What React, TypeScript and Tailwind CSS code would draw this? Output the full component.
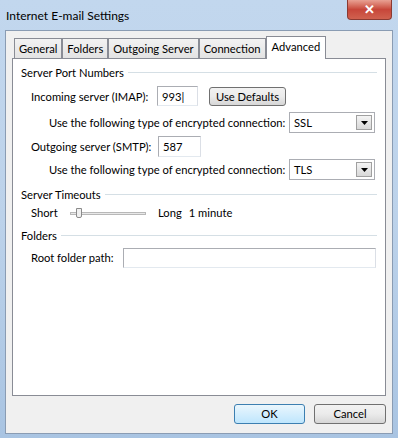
import { ReactNode } from "react";

const font = { fontFamily: 'Lato, "Liberation Sans", sans-serif' };

function Tab({ label, active }: { label: string; active?: boolean }) {
  if (active) {
    return (
      <div className="relative z-10 -mb-px flex h-[23px] items-start border border-b-0 border-[#898c95] bg-white px-[5px] pt-[4px]">
        {label}
      </div>
    );
  }
  return (
    <div className="flex h-[20px] items-center border border-b-0 border-[#898c95] bg-gradient-to-b from-[#f2f2f2] to-[#e3e3e3] px-[4px]">
      {label}
    </div>
  );
}

function Group({
  title,
  className,
  children,
}: {
  title: string;
  className?: string;
  children: ReactNode;
}) {
  return (
    <div className={className}>
      <div className="flex items-center gap-[4px]">
        <span>{title}</span>
        <div className="h-px flex-1 bg-[#d5dfe5]" />
      </div>
      {children}
    </div>
  );
}

function Field({ value, className }: { value?: string; className: string }) {
  return (
    <div
      className={`flex shrink-0 items-center border border-[#abadb3] border-b-[#e3e9ef] border-r-[#dbdfe6] bg-white px-[4px] ${className}`}
    >
      {value}
    </div>
  );
}

function Select({ value }: { value: string }) {
  return (
    <div className="flex h-[21px] w-[86px] shrink-0 items-center justify-between border border-[#abadb3] bg-white pl-[4px] pr-[2px]">
      <span>{value}</span>
      <div className="flex h-[15px] w-[16px] items-center justify-center border border-[#a0a0a0] bg-gradient-to-b from-[#f4f4f4] to-[#d8d8d8]">
        <svg width="7" height="4" viewBox="0 0 7 4">
          <path d="M0 0h7L3.5 4z" fill="#000" />
        </svg>
      </div>
    </div>
  );
}

function Button({ label, className }: { label: string; className: string }) {
  return (
    <div
      className={`flex shrink-0 items-center justify-center rounded-[3px] border ${className}`}
    >
      {label}
    </div>
  );
}

export default function App() {
  return (
    <div
      style={font}
      className="flex h-[438px] w-[398px] flex-col whitespace-nowrap bg-gradient-to-b from-[#c2d7ee] via-[#bcd2ea] to-[#a9c4e2] text-[11.2px] leading-none text-black"
    >
      <div className="flex h-[30px] items-start justify-between pl-[6px] pr-[6px]">
        <span className="mt-[10px] text-[12px]">Internet E-mail Settings</span>
        <div className="flex h-[20px] w-[45px] items-center justify-center rounded-b-[4px] border border-t-0 border-[#8b3a32] bg-gradient-to-b from-[#e8a093] via-[#c7463a] to-[#d0614f] text-[13px] font-bold text-white">
          ✕
        </div>
      </div>
      <div className="mx-[5px] flex h-[404px] flex-col border border-[#8a9cb3] bg-[#f0f0f0]">
        <div className="mx-[6px] mt-[5px] flex flex-col">
          <div className="flex items-end pl-[2px]">
            <Tab label="General" />
            <Tab label="Folders" />
            <Tab label="Outgoing Server" />
            <Tab label="Connection" />
            <Tab label="Advanced" active />
          </div>
          <div className="flex h-[338px] flex-col border border-[#898c95] bg-white pl-[8px] pr-[8px] pt-[8px]">
            <Group title="Server Port Numbers">
              <div className="mt-[8px] flex flex-col pl-[10px]">
                <div className="flex items-center">
                  <span className="w-[126px] shrink-0">Incoming server (IMAP):</span>
                  <Field value="993|" className="h-[20px] w-[41px]" />
                  <Button
                    label="Use Defaults"
                    className="ml-[11px] h-[19px] w-[77px] border-[#707070] bg-gradient-to-b from-[#f2f2f2] via-[#ebebeb] to-[#d6d6d6]"
                  />
                </div>
                <div className="mt-[6px] flex items-center pl-[18px]">
                  <span className="w-[240px] shrink-0">Use the following type of encrypted connection:</span>
                  <Select value="SSL" />
                </div>
                <div className="mt-[3px] flex items-center">
                  <span className="w-[127px] shrink-0">Outgoing server (SMTP):</span>
                  <Field value="587" className="h-[21px] w-[43px]" />
                </div>
                <div className="mt-[2px] flex items-center pl-[18px]">
                  <span className="w-[240px] shrink-0">Use the following type of encrypted connection:</span>
                  <Select value="TLS" />
                </div>
              </div>
            </Group>
            <Group title="Server Timeouts" className="mt-[9px]">
              <div className="mt-[7px] flex items-center pl-[10px]">
                <span className="w-[39px] shrink-0">Short</span>
                <div className="relative flex h-[10px] w-[76px] shrink-0 items-center">
                  <div className="h-[3px] w-full border border-[#b8b8b8] bg-[#e8e8e8]" />
                  <div className="absolute left-[6px] top-0 h-[10px] w-[6px] rounded-b-[2px] border border-[#8a8a8a] bg-[#f0f0f0]" />
                </div>
                <span className="ml-[12px]">Long</span>
                <span className="ml-[7px]">1 minute</span>
              </div>
            </Group>
            <Group title="Folders" className="mt-[11px]">
              <div className="mt-[7px] flex items-center pl-[10px]">
                <span className="w-[92px] shrink-0">Root folder path:</span>
                <Field className="h-[20px] w-[253px]" />
              </div>
            </Group>
          </div>
        </div>
        <div className="mt-[8px] flex justify-end gap-[9px] pr-[6px]">
          <Button label="OK" className="h-[20px] w-[71px] border-[#3c7fb1] bg-gradient-to-b from-[#eaf6fd] to-[#bee6fd]" />
          <Button label="Cancel" className="h-[20px] w-[72px] border-[#707070] bg-gradient-to-b from-[#f2f2f2] via-[#ebebeb] to-[#d6d6d6]" />
        </div>
      </div>
    </div>
  );
}
